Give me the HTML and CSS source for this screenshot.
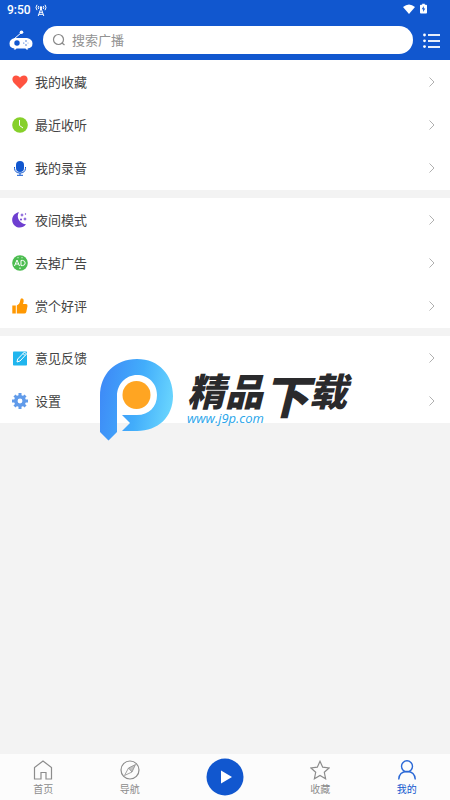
FILE: index.html
```html
<!DOCTYPE html>
<html lang="zh-CN">
<head>
<meta charset="utf-8">
<meta name="viewport" content="width=device-width, initial-scale=1">
<title>我的</title>
<link rel="stylesheet" href="styles.css">
</head>
<body>
<svg class="defs" aria-hidden="true">
  <symbol id="chevron" viewBox="0 0 8 12"><path d="M1.500 1.500L6 6l-4.500 4.500" fill="none" stroke="#b0b0b0" stroke-width="1"/></symbol>
</svg>
<header class="header">
  <div class="status">
    <span>9:50</span>
    <svg class="antenna" viewBox="0 0 12 12" fill="none" stroke="#fff"><path d="M2 0.8Q0 3.500 2 6.200M3.800 2Q2.600 3.500 3.800 5M10 .8Q12 3.500 10 6.200M8.200 2Q9.400 3.500 8.200 5M6 4L3.200 12M6 4l2.800 8M4.500 8.300h3M4 10.300h4" stroke-width="1"/><circle cx="6" cy="3.500" r="1.200" fill="#fff" stroke="none"/></svg>
    <div class="status-right">
      <svg class="wifi" viewBox="0 0 14 12"><path d="M1 4Q7-1 13 4L7 11z" fill="#fff"/></svg>
      <svg class="battery" viewBox="0 0 8 12"><path d="M2.500 0h3v1H7q1 0 1 1v8q0 1-1 1H1q-1 0-1-1V2q0-1 1-1h1.500z" fill="#fff"/><path d="M4.300 2.500L2 6.300h1.600v3L6 5.500H4.300z" fill="#1157cf"/></svg>
    </div>
  </div>
  <div class="toolbar">
    <svg class="radio" viewBox="0 0 24 20"><path d="M5 9L12.500 2.500" stroke="#fff" stroke-width="1"/><circle cx="12.500" cy="2.300" r="1.800" fill="#fff"/><path d="M6 8h12q5.500 1 5.500 5.500T18.500 18.500l.8 1h-2l-.8-1H7.500l-.8 1h-2l.8-1Q.5 18 .5 13.500T6 8z" fill="#fff"/><circle cx="8" cy="13" r="2.700" fill="#1157cf"/><g fill="#1157cf"><circle cx="14.800" cy="13" r=".6"/><circle cx="17" cy="11" r=".7"/><circle cx="17" cy="15" r=".7"/><circle cx="19" cy="13" r=".4"/></g></svg>
    <label class="search">
      <svg class="search-icon" viewBox="0 0 14 14" fill="none" stroke="#888" stroke-width="1.200"><circle cx="6.500" cy="6.500" r="5"/><path d="M10 10l2.500 2"/></svg>
      <input type="search" placeholder="搜索广播" aria-label="搜索广播">
    </label>
    <button class="list-button" aria-label="列表"><svg viewBox="0 0 17 15" fill="#fff"><path d="M5 1h12v2H5zM5 7h12v2H5zM5 13h12v2H5z" opacity=".9"/><circle cx="1.500" cy="2" r="1.400"/><circle cx="1.500" cy="7.800" r="1.400"/><circle cx="1.500" cy="13.600" r="1.400"/></svg></button>
  </div>
</header>

<main class="content">
  <nav class="group">
    <a class="row" href="#fav"><svg class="icon" viewBox="0 0 16 16"><path d="M8 15L1.500 8.500C-1 5 1 1.500 4 1.500c2 0 3.300 1 4 2.200.7-1.200 2-2.200 4-2.200 3 0 5 3.500 2.500 7z" fill="#ff5340"/></svg><span>我的收藏</span><svg class="chevron"><use href="#chevron"/></svg></a>
    <a class="row" href="#recent"><svg class="icon" viewBox="0 0 16 16"><circle cx="8" cy="8" r="7.800" fill="#86d02a"/><path d="M7.500 3v5.500L11 11" fill="none" stroke="#fff" stroke-width="1"/></svg><span>最近收听</span><svg class="chevron"><use href="#chevron"/></svg></a>
    <a class="row" href="#records"><svg class="icon" viewBox="0 0 16 16"><rect x="4" y="1" width="8" height="11" rx="4" fill="#1157cf"/><path d="M2.500 7v1.500Q3 13 8 13t5.500-4.500V7M8 13v2.200M5 15.300h6" fill="none" stroke="#1157cf" stroke-width="1"/></svg><span>我的录音</span><svg class="chevron"><use href="#chevron"/></svg></a>
  </nav>
  <nav class="group">
    <a class="row" href="#night"><svg class="icon" viewBox="0 0 16 16" fill="#6e3fd0"><path d="M7 .3C4 4 6.500 11 14 12.300 11 16.500 5 16.500 2 13-2 8 1 1 7 .3z"/><path d="M10 1l.6 1.400L12 3l-1.400.6L10 5l-.6-1.400L8 3l1.400-.6zM13 5l.6 1.400L15 7l-1.400.6L13 9l-.6-1.400L11 7l1.400-.6z"/><circle cx="9" cy="7.500" r="1"/><circle cx="13.500" cy="2" r=".7"/></svg><span>夜间模式</span><svg class="chevron"><use href="#chevron"/></svg></a>
    <a class="row" href="#no-ads"><svg class="icon" viewBox="0 0 16 16"><circle cx="8" cy="8" r="7.800" fill="#4cbd50"/><path d="M2.500 11L5 5l2.500 6M3.500 9h3M9 5.400v5.200h1.500q2.700-.3 2.700-2.600T10.500 5.400zM5.500 2.700h1M9.500 2.700h1M7.200 13.200h1.600" fill="none" stroke="#fff" stroke-width="1"/></svg><span>去掉广告</span><svg class="chevron"><use href="#chevron"/></svg></a>
    <a class="row" href="#rate"><svg class="icon" viewBox="0 0 16 16" fill="#ff9802"><path d="M.3 7.500h3.500v8H.3zM4.800 7.500Q8 6 8.300 2 8.500.3 10 .3q2 .3 1.700 3L11 6h3q1.700.2 1.500 2l-1.200 6q-.5 1.500-2 1.500H4.800z"/></svg><span>赏个好评</span><svg class="chevron"><use href="#chevron"/></svg></a>
  </nav>
  <nav class="group">
    <a class="row" href="#feedback"><svg class="icon" viewBox="0 0 16 16"><rect x="1" y="1.500" width="14" height="14" rx=".8" fill="#20b5ee"/><path d="M5 12l.7-3L12.500 2l2 2L8 11zM11 3.500l2 2" fill="#20b5ee" stroke="#fff" stroke-width="1"/></svg><span>意见反馈</span><svg class="chevron"><use href="#chevron"/></svg></a>
    <a class="row" href="#settings"><svg class="icon" viewBox="0 0 16 16"><circle cx="8" cy="8" r="4.200" fill="none" stroke="#619bea" stroke-width="3.500"/><g stroke="#619bea" stroke-width="3"><path d="M8 0v3M8 13v3M0 8h3M13 8h3M2.500 2.500l2 2M11.500 11.500l2 2M2.500 13.500l2-2M11.500 4.500l2-2"/></g></svg><span>设置</span><svg class="chevron"><use href="#chevron"/></svg></a>
  </nav>
  <div class="watermark">
    <svg class="watermark-logo" viewBox="0 0 74 82">
      <defs><linearGradient id="ring" x1="0" y1=".5" x2="1" y2=".7"><stop offset="0" stop-color="#3e8cf7"/><stop offset=".5" stop-color="#42adfb"/><stop offset="1" stop-color="#6cd8fe"/></linearGradient></defs>
      <circle cx="37" cy="36" r="21" fill="#fff"/>
      <path d="M0 37C0 15 15 0 37 0S73 16 73 37 58 72 37 72H22l8-8-8-8h15c12 0 20-8 20-20S48 16 37 16s-20 9-20 21v36l-8.500 8.500L0 73z" fill="url(#ring)"/>
      <circle cx="36.500" cy="36" r="14" fill="#ffa522"/>
    </svg>
    <div class="watermark-text"><div class="watermark-name">精品<span class="tall">下</span>载</div><div class="watermark-url">www.j9p.com</div></div>
  </div>
</main>

<nav class="tabs">
  <a class="tab" href="#home"><svg viewBox="0 0 20 20" fill="none" stroke="#8c8c8c" stroke-width="1.200"><path d="M1.500 19V7.500L10 1l8.500 6.500V19h-5.500v-6.500H8V19z"/></svg>首页</a>
  <a class="tab" href="#nav"><svg viewBox="0 0 20 20" fill="none" stroke="#8c8c8c" stroke-width="1.200"><circle cx="10" cy="10" r="9"/><path d="M15.500 4.500L8.500 8 4.500 15.500 12 12zM8.500 8L12 12" stroke-width=".8"/><path d="M8.500 8l3.500 4 3.500-7.500z" fill="#8c8c8c" stroke="none" opacity=".5"/></svg>导航</a>
  <button class="play" aria-label="播放"><svg viewBox="0 0 38 38"><circle cx="19" cy="19" r="18.500" fill="#1157cf"/><path d="M15 12.500v13L26 19z" fill="#fff"/></svg></button>
  <a class="tab" href="#collect"><svg viewBox="0 0 20 20" fill="none" stroke="#8c8c8c"><path d="M10 1.300l2.700 5.900 6.300.8-4.700 4.300 1.300 6.400L10 15.500l-5.600 3.200 1.300-6.400L1 8l6.300-.8z" stroke-width="1.200"/></svg>收藏</a>
  <a class="tab active" href="#mine" aria-current="page"><svg viewBox="0 0 20 20" fill="none" stroke="#2a68d6" stroke-width="1.400"><circle cx="10" cy="6.300" r="5.500"/><path d="M1.700 19.500q.5-8 8.300-8t8.300 8"/></svg>我的</a>
</nav>
</body>
</html>
```

FILE: styles.css
```css
* {
  box-sizing: border-box;
}

body {
  margin: 0;
  min-height: 100vh;
  display: flex;
  flex-direction: column;
  background: #f3f3f3;
  color: #444;
  font-family: "Noto Sans CJK SC", sans-serif;
  font-size: 13px;
}

a {
  color: inherit;
  text-decoration: none;
}

button {
  padding: 0;
  border: 0;
  background: none;
}

svg {
  display: block;
  flex: none;
}

.defs {
  position: absolute;
  width: 0;
  height: 0;
}

.header {
  background: #1157cf;
  color: #fff;
}

.status {
  display: flex;
  align-items: center;
  gap: 4px;
  height: 20px;
  padding: 0 23px 0 7px;
  font: 500 12px Roboto, sans-serif;
}

.antenna {
  width: 12px;
  height: 12px;
}

.status-right {
  display: flex;
  gap: 4px;
  margin-left: auto;
  padding-bottom: 3px;
}

.wifi {
  width: 14px;
  height: 12px;
}

.battery {
  width: 7px;
  height: 12px;
}

.toolbar {
  display: flex;
  align-items: center;
  gap: 10px;
  height: 40px;
  padding: 0 10px 0 9px;
}

.radio {
  width: 24px;
  height: 20px;
}

.search {
  flex: 1;
  display: flex;
  align-items: center;
  gap: 6px;
  min-width: 0;
  height: 28px;
  padding: 0 9px;
  border-radius: 14px;
  background: #fff;
}

.search-icon {
  width: 14px;
  height: 14px;
}

.search input {
  flex: 1;
  min-width: 0;
  height: 20px;
  margin-bottom: 2px;
  padding: 0;
  border: 0;
  outline: 0;
  background: none;
  color: #444;
  font: inherit;
}

.search input::placeholder {
  color: #929292;
}

.list-button svg {
  width: 17px;
  height: 15px;
}

.content {
  position: relative;
  flex: 1;
  display: flex;
  flex-direction: column;
  gap: 8px;
}

.group {
  padding-bottom: 1px;
  background: #fff;
}

.row {
  display: flex;
  align-items: center;
  gap: 7px;
  height: 43px;
  padding: 0 14px 0 12px;
}

.icon {
  width: 16px;
  height: 16px;
}

.chevron {
  width: 8px;
  height: 12px;
  margin-left: auto;
}

.watermark {
  position: absolute;
  top: 299px;
  left: 50%;
  display: flex;
  gap: 13px;
  margin-left: -125px;
  pointer-events: none;
}

.watermark-logo {
  width: 74px;
  height: 82px;
}

.watermark-text {
  padding-top: 11px;
  font-style: italic;
}

.watermark-name {
  height: 40px;
  color: #2a2a2c;
  font-size: 38px;
  font-weight: 900;
  line-height: 40px;
  white-space: nowrap;
}

.tall {
  font-size: 46px;
  line-height: 40px;
  vertical-align: -8px;
}

.watermark-url {
  color: #2aa5ea;
  font: italic 13px/16px "Open Sans", sans-serif;
}

.tabs {
  display: grid;
  grid-template-columns: 1fr 1fr 104px 1fr 1fr;
  align-items: center;
  height: 46px;
  background: #fcfcfc;
}

.tab {
  display: flex;
  flex-direction: column;
  align-items: center;
  gap: 2px;
  padding-top: 2px;
  color: #8c8c8c;
  font-size: 10px;
  line-height: 14px;
}

.tab svg {
  width: 20px;
  height: 20px;
}

.active {
  color: #1157cf;
}

.play {
  justify-self: center;
}

.play svg {
  width: 38px;
  height: 38px;
}
```
